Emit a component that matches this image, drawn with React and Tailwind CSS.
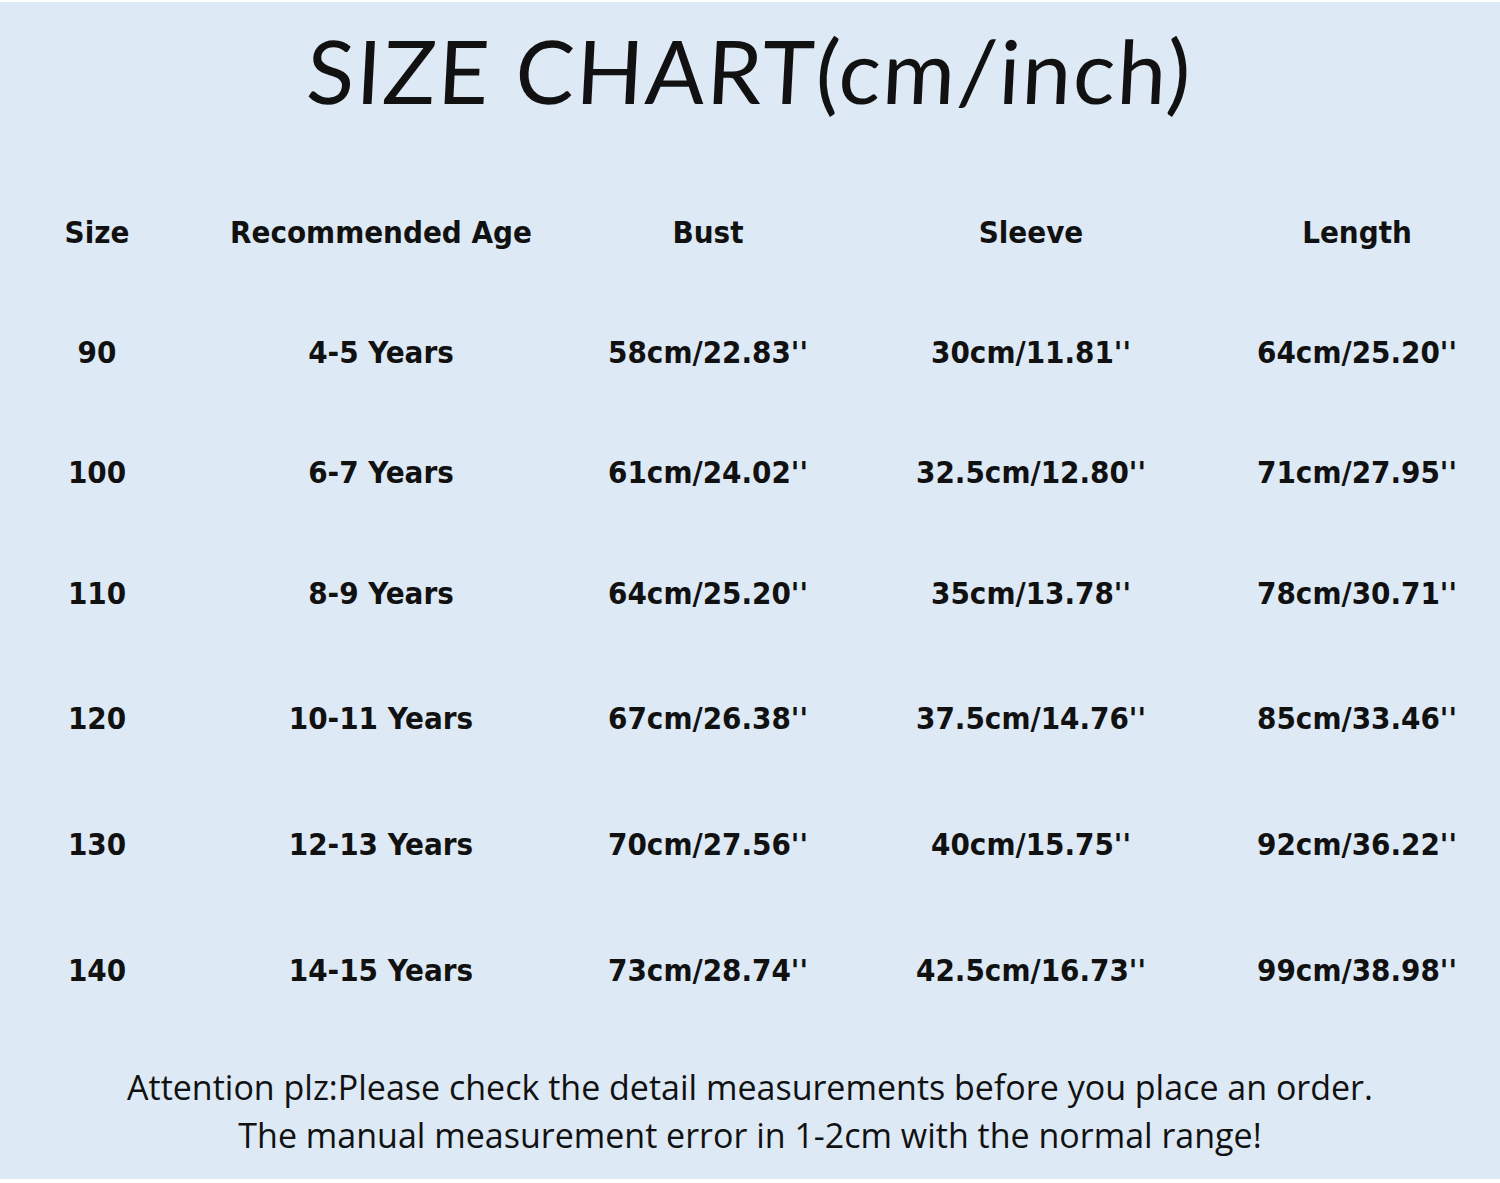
export default function App() {
  const rows = [
    ["90", "4-5 Years", "58cm/22.83''", "30cm/11.81''", "64cm/25.20''"],
    ["100", "6-7 Years", "61cm/24.02''", "32.5cm/12.80''", "71cm/27.95''"],
    ["110", "8-9 Years", "64cm/25.20''", "35cm/13.78''", "78cm/30.71''"],
    ["120", "10-11 Years", "67cm/26.38''", "37.5cm/14.76''", "85cm/33.46''"],
    ["130", "12-13 Years", "70cm/27.56''", "40cm/15.75''", "92cm/36.22''"],
    ["140", "14-15 Years", "73cm/28.74''", "42.5cm/16.73''", "99cm/38.98''"],
  ];
  const heights = ["h-[120px]", "h-[120px]", "h-[123px]", "h-[126px]", "h-[126px]", "h-[126px]"];
  const Row = ({ cells, h }) => (
    <div className={`grid grid-cols-[194px_374px_280px_366px_286px] items-center ${h}`}>
      {cells.map((c, i) => (
        <div key={i} className="text-center">{c}</div>
      ))}
    </div>
  );
  return (
    <div className="w-[1500px] h-[1183px] bg-white pt-[2px] pb-[4px]">
      <div className="h-full bg-[#dde9f5] flex flex-col text-[#111]">
        <div className="h-[170px] flex items-start justify-center pt-[20px]">
          <h1 className="font-['Lato','Open_Sans',sans-serif] font-normal text-[88px] leading-[96px] tracking-[2px] -skew-x-3">
            SIZE CHART(cm/inch)
          </h1>
        </div>
        <div className="font-['DejaVu_Sans_Condensed','DejaVu_Sans',sans-serif] font-bold text-[31px]">
          <Row cells={["Size", "Recommended Age", "Bust", "Sleeve", "Length"]} h="h-[120px]" />
          {rows.map((r, i) => (
            <Row key={i} cells={r} h={heights[i]} />
          ))}
        </div>
        <div className="pt-[30px] text-center font-['Open_Sans','Noto_Sans',sans-serif] text-[34px] leading-[48px]">
          <p>Attention plz:Please check the detail measurements before you place an order.</p>
          <p>The manual measurement error in 1-2cm with the normal range!</p>
        </div>
      </div>
    </div>
  );
}
